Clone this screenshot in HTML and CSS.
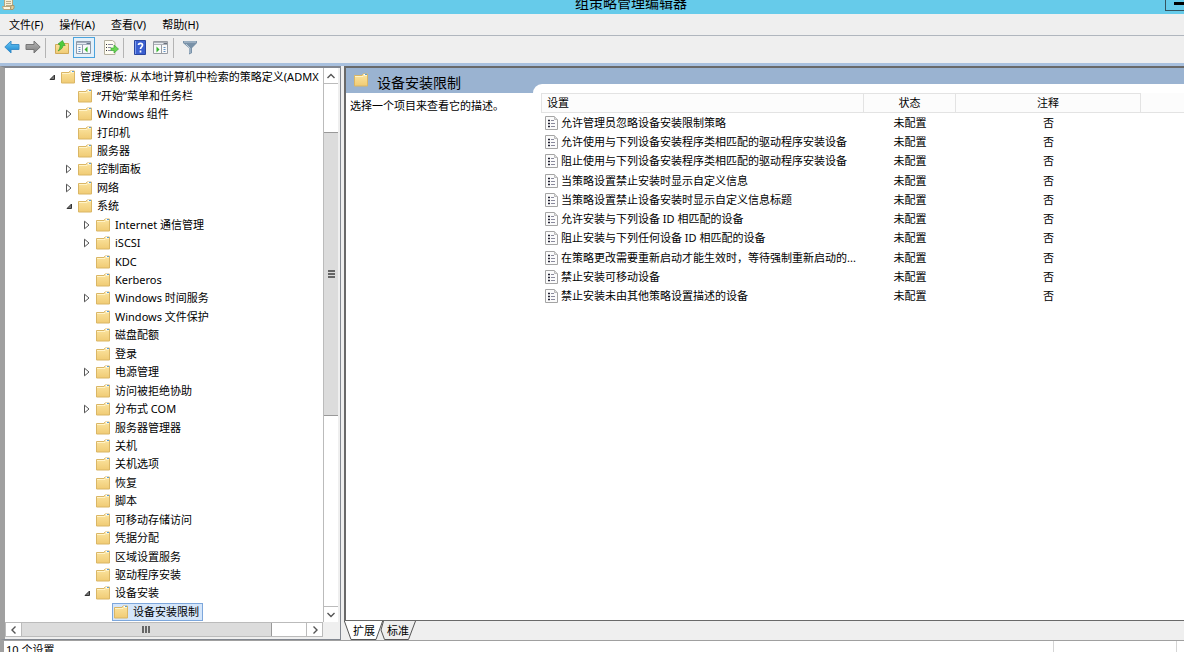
FILE: index.html
```html
<!DOCTYPE html>
<html lang="zh-CN">
<head>
<meta charset="utf-8">
<title>组策略管理编辑器</title>
<link rel="stylesheet" href="styles.css">
</head>
<body>
<svg class="defs" aria-hidden="true">
  <defs>
    <linearGradient id="gold" x1="0" y1="0" x2="0" y2="1"><stop offset="0" stop-color="#fbe4a0"/><stop offset="1" stop-color="#f0cb74"/></linearGradient>
    <linearGradient id="blue" x1="0" y1="0" x2="0" y2="1"><stop offset="0" stop-color="#6cc8f4"/><stop offset="1" stop-color="#1583cf"/></linearGradient>
    <linearGradient id="gray" x1="0" y1="0" x2="0" y2="1"><stop offset="0" stop-color="#b4b4b4"/><stop offset="1" stop-color="#808080"/></linearGradient>
    <symbol id="folder" viewBox="0 0 14 14"><path d="M.5 2.500h7.500l1-1.500h4.500v12H.5z" fill="url(#gold)" stroke="#dab665"/><path d="M1 3.500h8l1-1h3" stroke="#fff3c8" fill="none"/><path d="M9.500 1.500h2" stroke="#fff"/><path d="M11 1.500h2" stroke="#5b9ed8"/></symbol>
    <symbol id="closed" viewBox="0 0 8 10"><path d="M1.500 1.200v7.600L6 5z" fill="#fff" stroke="#555"/></symbol>
    <symbol id="open" viewBox="0 0 8 10"><path d="M6.500 3v4.500H2z" fill="#777" stroke="#333"/></symbol>
    <symbol id="setting" viewBox="0 0 13 14"><path d="M.5.5h9l3 3v10H.5z" fill="#fbfbfb" stroke="#a4a4a4"/><path d="M9.500.5v3h3" fill="#ddd" stroke="#bbb"/><path d="M3 4.500h2M3 7.500h2M3 10.500h2" stroke="#223" stroke-width="1.500"/><path d="M6 4.500h3M6 7.500h4M6 10.500h4" stroke="#8a8a9c"/></symbol>
    <symbol id="up" viewBox="0 0 10 10"><path d="M1.500 7L5 3.500 8.500 7" fill="none" stroke="#555" stroke-width="1.400"/></symbol>
    <symbol id="down" viewBox="0 0 10 10"><path d="M1.500 3L5 6.500 8.500 3" fill="none" stroke="#555" stroke-width="1.400"/></symbol>
    <symbol id="left" viewBox="0 0 10 10"><path d="M6.500 1.500L3 5l3.500 3.500" fill="none" stroke="#555" stroke-width="1.400"/></symbol>
    <symbol id="right" viewBox="0 0 10 10"><path d="M3.500 1.500L7 5 3.500 8.500" fill="none" stroke="#555" stroke-width="1.400"/></symbol>
  </defs>
</svg>
<div class="window">
  <header class="titlebar">
    <svg class="app-icon" viewBox="0 0 13 10" aria-hidden="true"><path d="M2.500-1h8v9h-8z" fill="#f8efd6" stroke="#b5a67e"/><path d="M4 1.500h5M4 3.500h5M4 5.500h5" stroke="#b9ad8c"/><path d="M.5 6.500h8v3h-7z" fill="#fdf6e0" stroke="#b5a67e"/><path d="M9 5.500h3v2.500L11 9.500H8.500z" fill="#e3cf9c" stroke="#a8976b"/></svg>
    <h1>组策略管理编辑器</h1>
    <button class="minimize" type="button" aria-label="最小化"></button>
  </header>
  <nav class="menubar">
    <button type="button">文件(F)</button>
    <button type="button">操作(A)</button>
    <button type="button">查看(V)</button>
    <button type="button">帮助(H)</button>
  </nav>
  <div class="toolbar" role="toolbar">
    <button type="button" aria-label="后退"><svg viewBox="0 0 16 15"><path d="M.8 7L7 1v3.500h8v5H7V13z" fill="url(#blue)" stroke="#3c8fc9"/></svg></button>
    <button type="button" aria-label="前进"><svg viewBox="0 0 16 15"><path d="M15.200 7L9 1v3.500H1v5h8V13z" fill="url(#gray)" stroke="#777"/></svg></button>
    <span class="sep"></span>
    <button type="button" aria-label="上一级"><svg viewBox="0 0 16 15"><path d="M1.500 4.500H6l1.500 1.500 2-2.500h5v10h-13z" fill="url(#gold)" stroke="#d0aa5a"/><path d="M4 11C7.500 9.500 9 7.500 9 5.500h2.200L8.500.5 4 4l2 .7C6.200 7.500 5.500 9.500 4 11z" fill="#4fcb3c" stroke="#2f9c2a" stroke-width=".6"/></svg></button>
    <button type="button" class="pressed" aria-label="显示控制台树"><svg viewBox="0 0 16 15"><path d="M.5 1.500h14v12H.5z" fill="#f7f8fa" stroke="#8d99a8"/><path d="M1 2h13v3H1z" fill="#a5b0bf"/><path d="M1 3.500h9" stroke="#e5ebf2"/><path d="M11 3.500h3" stroke="#63738a"/><path d="M6.500 5v8.500" stroke="#8d99a8"/><path d="M2.500 7.500h2M2.500 9.500h2M2.500 11.500h2" stroke="#6292c2"/><path d="M11.500 6.500v6l-3-3z" fill="#35b52f"/></svg></button>
    <span class="space"></span>
    <button type="button" aria-label="导出列表"><svg viewBox="0 0 16 15"><path d="M1.500.5h8l2.500 2v12H1.500z" fill="#fffdf2" stroke="#b4b09e"/><path d="M3 4.500h1M3 7.500h1M3 10.500h1" stroke="#333"/><path d="M5 4.500h5M5 7.500h3M5 10.500h3" stroke="#8b8aa0"/><path d="M8 8h3V5L15.500 9 11 13V10.500H8z" fill="#6bd653" stroke="#3aa934" stroke-width=".7"/></svg></button>
    <span class="sep"></span>
    <button type="button" aria-label="帮助"><svg viewBox="0 0 16 15"><path d="M2.500.5h11v14h-11z" fill="#3a5fd0" stroke="#2a469f"/><path d="M3.500 1v13" stroke="#7f9dee"/><path d="M6.500 5C6.500 2.700 10.500 2.700 10.500 5c0 2-2 2-2 4M8.500 10.500v2" fill="none" stroke="#fff" stroke-width="1.700"/></svg></button>
    <button type="button" aria-label="显示操作窗格"><svg viewBox="0 0 16 15"><path d="M.5 1.500h14v12H.5z" fill="#f9f9f9" stroke="#989ca2"/><path d="M1 2h13v3H1z" fill="#adb1b8"/><path d="M1 3.500h9" stroke="#e8ebef"/><path d="M11 3.500h3" stroke="#69717d"/><path d="M8.500 5v8.500" stroke="#989ca2"/><path d="M10.500 7.500h2M10.500 9.500h2M10.500 11.500h2" stroke="#6292c2"/><path d="M3.500 6.500v6l3-3z" fill="#35b52f"/></svg></button>
    <span class="sep"></span>
    <button type="button" aria-label="筛选"><svg viewBox="0 0 16 15"><path d="M1 1h14v2L10 8v5l-3 1.500V8L1 3z" fill="#7891a8"/><path d="M2 2h12" stroke="#b9c8d6"/><path d="M4 4l4 4v5" fill="none" stroke="#bccbd9"/></svg></button>
  </div>
  <main class="workspace">
    <section class="tree-pane">
      <ul class="tree">
        <li class="l0"><svg class="exp"><use href="#open"/></svg><svg class="icon"><use href="#folder"/></svg><span>管理模板: 从本地计算机中检索的策略定义(ADMX</span></li>
        <li class="l1"><svg class="exp"></svg><svg class="icon"><use href="#folder"/></svg><span>“开始”菜单和任务栏</span></li>
        <li class="l1"><svg class="exp"><use href="#closed"/></svg><svg class="icon"><use href="#folder"/></svg><span>Windows 组件</span></li>
        <li class="l1"><svg class="exp"></svg><svg class="icon"><use href="#folder"/></svg><span>打印机</span></li>
        <li class="l1"><svg class="exp"></svg><svg class="icon"><use href="#folder"/></svg><span>服务器</span></li>
        <li class="l1"><svg class="exp"><use href="#closed"/></svg><svg class="icon"><use href="#folder"/></svg><span>控制面板</span></li>
        <li class="l1"><svg class="exp"><use href="#closed"/></svg><svg class="icon"><use href="#folder"/></svg><span>网络</span></li>
        <li class="l1"><svg class="exp"><use href="#open"/></svg><svg class="icon"><use href="#folder"/></svg><span>系统</span></li>
        <li class="l2"><svg class="exp"><use href="#closed"/></svg><svg class="icon"><use href="#folder"/></svg><span>Internet 通信管理</span></li>
        <li class="l2"><svg class="exp"><use href="#closed"/></svg><svg class="icon"><use href="#folder"/></svg><span>iSCSI</span></li>
        <li class="l2"><svg class="exp"></svg><svg class="icon"><use href="#folder"/></svg><span>KDC</span></li>
        <li class="l2"><svg class="exp"></svg><svg class="icon"><use href="#folder"/></svg><span>Kerberos</span></li>
        <li class="l2"><svg class="exp"><use href="#closed"/></svg><svg class="icon"><use href="#folder"/></svg><span>Windows 时间服务</span></li>
        <li class="l2"><svg class="exp"></svg><svg class="icon"><use href="#folder"/></svg><span>Windows 文件保护</span></li>
        <li class="l2"><svg class="exp"></svg><svg class="icon"><use href="#folder"/></svg><span>磁盘配额</span></li>
        <li class="l2"><svg class="exp"></svg><svg class="icon"><use href="#folder"/></svg><span>登录</span></li>
        <li class="l2"><svg class="exp"><use href="#closed"/></svg><svg class="icon"><use href="#folder"/></svg><span>电源管理</span></li>
        <li class="l2"><svg class="exp"></svg><svg class="icon"><use href="#folder"/></svg><span>访问被拒绝协助</span></li>
        <li class="l2"><svg class="exp"><use href="#closed"/></svg><svg class="icon"><use href="#folder"/></svg><span>分布式 COM</span></li>
        <li class="l2"><svg class="exp"></svg><svg class="icon"><use href="#folder"/></svg><span>服务器管理器</span></li>
        <li class="l2"><svg class="exp"></svg><svg class="icon"><use href="#folder"/></svg><span>关机</span></li>
        <li class="l2"><svg class="exp"></svg><svg class="icon"><use href="#folder"/></svg><span>关机选项</span></li>
        <li class="l2"><svg class="exp"></svg><svg class="icon"><use href="#folder"/></svg><span>恢复</span></li>
        <li class="l2"><svg class="exp"></svg><svg class="icon"><use href="#folder"/></svg><span>脚本</span></li>
        <li class="l2"><svg class="exp"></svg><svg class="icon"><use href="#folder"/></svg><span>可移动存储访问</span></li>
        <li class="l2"><svg class="exp"></svg><svg class="icon"><use href="#folder"/></svg><span>凭据分配</span></li>
        <li class="l2"><svg class="exp"></svg><svg class="icon"><use href="#folder"/></svg><span>区域设置服务</span></li>
        <li class="l2"><svg class="exp"></svg><svg class="icon"><use href="#folder"/></svg><span>驱动程序安装</span></li>
        <li class="l2"><svg class="exp"><use href="#open"/></svg><svg class="icon"><use href="#folder"/></svg><span>设备安装</span></li>
        <li class="l3"><button type="button" class="selected"><svg class="icon"><use href="#folder"/></svg><span>设备安装限制</span></button></li>
      </ul>
      <div class="vscroll">
        <button type="button" aria-label="向上滚动"><svg><use href="#up"/></svg></button>
        <div class="vtrack"><div class="vthumb"><i></i><i></i><i></i></div></div>
        <button type="button" aria-label="向下滚动"><svg><use href="#down"/></svg></button>
      </div>
      <div class="hscroll">
        <button type="button" aria-label="向左滚动"><svg><use href="#left"/></svg></button>
        <div class="htrack"><div class="hthumb"><i></i><i></i><i></i></div></div>
        <button type="button" aria-label="向右滚动"><svg><use href="#right"/></svg></button>
      </div>
    </section>
    <section class="detail-pane">
      <div class="detail">
        <div class="description">
          <h2><svg class="heading-icon"><use href="#folder"/></svg><span>设备安装限制</span></h2>
          <p>选择一个项目来查看它的描述。</p>
        </div>
        <div class="list-column">
          <div class="list">
            <table>
              <colgroup><col class="c-name"><col class="c-state"><col class="c-note"><col></colgroup>
              <thead><tr><th scope="col">设置</th><th scope="col">状态</th><th scope="col">注释</th><td></td></tr></thead>
              <tbody>
                <tr><td><div><svg><use href="#setting"/></svg><span>允许管理员忽略设备安装限制策略</span></div></td><td>未配置</td><td>否</td><td></td></tr>
                <tr><td><div><svg><use href="#setting"/></svg><span>允许使用与下列设备安装程序类相匹配的驱动程序安装设备</span></div></td><td>未配置</td><td>否</td><td></td></tr>
                <tr><td><div><svg><use href="#setting"/></svg><span>阻止使用与下列设备安装程序类相匹配的驱动程序安装设备</span></div></td><td>未配置</td><td>否</td><td></td></tr>
                <tr><td><div><svg><use href="#setting"/></svg><span>当策略设置禁止安装时显示自定义信息</span></div></td><td>未配置</td><td>否</td><td></td></tr>
                <tr><td><div><svg><use href="#setting"/></svg><span>当策略设置禁止设备安装时显示自定义信息标题</span></div></td><td>未配置</td><td>否</td><td></td></tr>
                <tr><td><div><svg><use href="#setting"/></svg><span>允许安装与下列设备 ID 相匹配的设备</span></div></td><td>未配置</td><td>否</td><td></td></tr>
                <tr><td><div><svg><use href="#setting"/></svg><span>阻止安装与下列任何设备 ID 相匹配的设备</span></div></td><td>未配置</td><td>否</td><td></td></tr>
                <tr><td><div><svg><use href="#setting"/></svg><span>在策略更改需要重新启动才能生效时，等待强制重新启动的...</span></div></td><td>未配置</td><td>否</td><td></td></tr>
                <tr><td><div><svg><use href="#setting"/></svg><span>禁止安装可移动设备</span></div></td><td>未配置</td><td>否</td><td></td></tr>
                <tr><td><div><svg><use href="#setting"/></svg><span>禁止安装未由其他策略设置描述的设备</span></div></td><td>未配置</td><td>否</td><td></td></tr>
              </tbody>
            </table>
          </div>
        </div>
      </div>
      <div class="tabs" role="tablist">
        <button type="button" role="tab" aria-selected="true" class="tab active"><svg viewBox="0 0 40 19" aria-hidden="true"><path d="M0-1l7 19.500h25L39-1" fill="#fff" stroke="#555"/></svg><span>扩展</span></button>
        <button type="button" role="tab" aria-selected="false" class="tab"><svg viewBox="0 0 36 19" aria-hidden="true"><path d="M3.500 0L1 9l3.500 9.500h24L35.500 0" fill="#eee" stroke="#555"/></svg><span>标准</span></button>
      </div>
    </section>
  </main>
  <footer class="statusbar"><span class="count">10 个设置</span><span class="cell"></span><span class="grip"></span></footer>
</div>
</body>
</html>
```
FILE: styles.css
```css
* { box-sizing: border-box; }
body { margin: 0; font: 11px/18px "Noto Sans", "Noto Sans CJK SC", sans-serif; color: #000; overflow: hidden; }
h1, h2, p, ul { margin: 0; padding: 0; font-weight: normal; }
button { margin: 0; padding: 0; border: 0; background: transparent; font: inherit; color: inherit; }
svg { display: block; flex: none; }
.defs { position: absolute; width: 0; height: 0; }

.window { height: 100vh; display: flex; flex-direction: column; background: #efefef; }

.titlebar { position: relative; flex: none; height: 14px; background: #66cbea; overflow: hidden; display: flex; justify-content: center; align-items: flex-end; }
.titlebar h1 { font-size: 14px; line-height: 20px; flex: none; padding-left: 78px; margin-bottom: 1px; }
.app-icon { position: absolute; left: 2px; top: 0; width: 13px; height: 10px; }
.minimize { position: absolute; right: 0; top: 0; width: 19px; height: 11px; border-left: 1px solid #35545f; border-bottom: 1px solid #35545f; }
.minimize::before { content: ""; display: block; margin: 2px 0 5px 8px; height: 3px; background: #000; }

.menubar { flex: none; height: 22px; display: flex; align-items: center; gap: 16px; padding-left: 9px; border-bottom: 1px solid #b0b6be; }

.toolbar { flex: none; height: 27px; display: flex; align-items: center; padding: 0 0 4px 2px; }
.toolbar button { width: 21px; height: 21px; display: grid; place-items: center start; padding-left: 2px; }
.toolbar button svg { width: 16px; height: 15px; }
.toolbar .pressed { width: 22px; padding: 0; place-items: center; border: 1px solid #4aa3dd; background: #e4f0f9; }
.sep { width: 1px; height: 20px; margin: 0 6px 0 1px; background: #b4b4b4; }
.space { width: 6px; }

.workspace { flex: 1; min-height: 0; display: flex; background: #efefef; border-top: 3px solid #a8c0de; }

.tree-pane { flex: none; width: 341px; display: grid; grid-template-columns: minmax(0, 1fr) 15px; grid-template-rows: minmax(0, 1fr) 16px; border: solid #828790; border-width: 2px 1px 1px 1px; border-left: 5px solid #a0a0a0; padding: 0 2px 1px 0; }
.tree { list-style: none; background: #fff; display: flex; flex-direction: column; overflow: hidden; padding-bottom: 1px; }
.tree li { flex: 1; min-height: 0; display: flex; align-items: center; white-space: nowrap; }
.exp { width: 8px; height: 10px; margin-right: 5px; }
.icon { width: 14px; height: 14px; margin-right: 5px; }
.l0 { padding-left: 43px; }
.l1 { padding-left: 60px; }
.l2 { padding-left: 78px; }
.l3 { padding-left: 107px; }
.selected { display: flex; align-items: center; height: 18px; padding: 0 3px 0 1px; background: #d5e6fa; border: 1px solid #7da7dc; }

.vscroll { display: flex; flex-direction: column; background: #fff; border-left: 1px solid #bbb; }
.vscroll button { flex: none; height: 15px; display: grid; place-items: center; }
.vscroll svg, .hscroll svg { width: 10px; height: 10px; }
.vtrack { flex: 1; padding-top: 48px; border-top: 1px solid #bbb; border-bottom: 1px solid #bbb; }
.vthumb { height: 60%; background: #dcdcdc; border-top: 1px solid #999; border-bottom: 1px solid #999; display: flex; flex-direction: column; gap: 1px; align-items: center; justify-content: center; }
.vthumb i { width: 7px; height: 2px; background: #666; }
.hscroll { display: flex; height: 15px; background: #fff; border: 1px solid #bbb; }
.hscroll button { flex: none; width: 15px; display: grid; place-items: center; }
.htrack { flex: 1; border-left: 1px solid #bbb; border-right: 1px solid #bbb; }
.hthumb { width: 88%; height: 100%; background: #dcdcdc; border-right: 1px solid #999; display: flex; gap: 1px; align-items: center; justify-content: center; }
.hthumb i { width: 2px; height: 7px; background: #666; }

.detail-pane { flex: 1; min-width: 0; margin-left: 3px; display: flex; flex-direction: column; }
.detail { flex: 1; min-height: 0; display: flex; background: #fff; border: solid #696969; border-width: 2px 0 1px 2px; }
.description { flex: none; width: 187px; }
.description h2 { display: flex; align-items: center; height: 25px; padding-left: 8px; background: #9ab3d1; font-size: 14px; line-height: 20px; }
.description h2 span { padding-top: 4px; }
.heading-icon { width: 14px; height: 14px; margin: 0 9px 2px 0; }
.description p { padding: 4px 0 0 4px; white-space: nowrap; }
.list-column { flex: 1; min-width: 0; padding-top: 16px; background: #9ab3d1; }
.list { height: 100%; background: #fff; border-top-left-radius: 9px; padding: 9px 0 0 8px; }
table { width: 100%; height: 213px; table-layout: fixed; border-collapse: separate; border-spacing: 0; text-align: center; }
.c-name { width: 323px; }
.c-state { width: 92px; }
.c-note { width: 185px; }
th, td { padding: 0; font-weight: normal; white-space: nowrap; }
thead { height: 19px; }
thead th, thead td { height: 19px; background: #fcfcfc; border-bottom: 1px solid #e3e3e3; }
thead th { border-top: 1px solid #e3e3e3; border-right: 1px solid #e3e3e3; }
thead th:first-child { text-align: left; padding-left: 5px; border-left: 1px solid #e3e3e3; }
tbody td div { display: flex; align-items: center; gap: 3px; padding-left: 4px; }
tbody td svg { width: 13px; height: 14px; }

.tabs { flex: none; height: 19px; display: flex; }
.tab { position: relative; width: 36px; height: 19px; text-align: center; }
.tab.active { z-index: 1; width: 40px; }
.tab + .tab { margin-left: -4px; }
.tab svg { position: absolute; left: 0; top: 0; width: 100%; height: 19px; }
.tab span { position: relative; }

.statusbar { flex: none; height: 12px; display: flex; background: #fff; border-top: 1px solid #a0a0a0; overflow: hidden; border-left: 4px solid #a0a0a0; }
.count { flex: 1; padding-left: 2px; }
.cell { width: 123px; border-left: 1px solid #d5d5d5; }
.grip { width: 8px; border-left: 1px solid #d5d5d5; }
```
